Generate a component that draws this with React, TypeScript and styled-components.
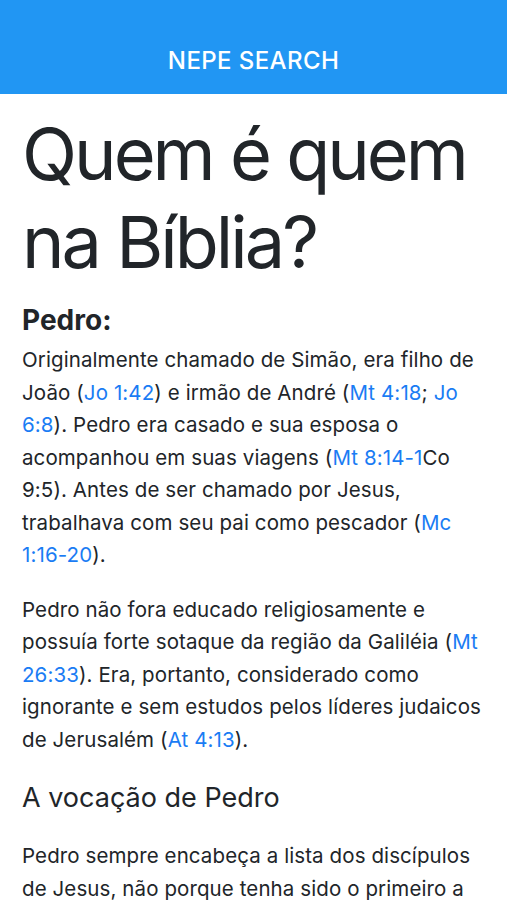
import styled, { createGlobalStyle } from "styled-components";

const GlobalStyle = createGlobalStyle`
  html, body {
    margin: 0;
    padding: 0;
    background: #ffffff;
  }
  body {
    font-family: Inter, "Noto Sans", "Liberation Sans", sans-serif;
    color: #212529;
    -webkit-font-smoothing: antialiased;
  }
`;

export default function App() {
  return (
    <>
      <GlobalStyle />
      <TopBar>
        <BarTitle>{"NEPE SEARCH"}</BarTitle>
      </TopBar>
      <Content>
        <PageTitle>{"Quem é quem na Bíblia?"}</PageTitle>
        <EntryName>{"Pedro:"}</EntryName>
        <Paragraph>
          {"Originalmente chamado de Simão, era filho de João ("}
          <Ref href="#">{"Jo 1:42"}</Ref>
          {") e irmão de André ("}
          <Ref href="#">{"Mt 4:18"}</Ref>
          {"; "}
          <Ref href="#">{"Jo 6:8"}</Ref>
          {"). Pedro era casado e sua esposa o acompanhou em suas viagens ("}
          <Ref href="#">{"Mt 8:14-1"}</Ref>
          {"Co 9:5). Antes de ser chamado por Jesus, trabalhava com seu pai como pescador ("}
          <Ref href="#">{"Mc 1:16-20"}</Ref>
          {")."}
        </Paragraph>
        <Paragraph>
          {"Pedro não fora educado religiosamente e possuía forte sotaque da região da Galiléia ("}
          <Ref href="#">{"Mt 26:33"}</Ref>
          {"). Era, portanto, considerado como ignorante e sem estudos pelos líderes judaicos de Jerusalém ("}
          <Ref href="#">{"At 4:13"}</Ref>
          {")."}
        </Paragraph>
        <SectionTitle>{"A vocação de Pedro"}</SectionTitle>
        <Paragraph>
          {"Pedro sempre encabeça a lista dos discípulos de Jesus, não porque tenha sido o primeiro a ser chamado, mas porque se destacou entre os doze."}
        </Paragraph>
      </Content>
    </>
  );
}

const TopBar = styled.header`
  background-color: #2196f3;
  height: 94px;
  display: flex;
  align-items: flex-end;
  justify-content: center;
  padding-bottom: 19px;
  box-sizing: border-box;
`;

const BarTitle = styled.h1`
  margin: 0;
  color: #ffffff;
  font-size: 24px;
  font-weight: 500;
  line-height: 28px;
  letter-spacing: 0.4px;
`;

const Content = styled.main`
  padding: 16px 22px 40px;
`;

const PageTitle = styled.h2`
  margin: 0 0 17px;
  font-size: 72px;
  font-weight: 400;
  line-height: 88px;
  letter-spacing: -3px;
  color: #212529;
`;

const EntryName = styled.h3`
  margin: 0 0 7px;
  font-size: 28px;
  font-weight: 700;
  line-height: 34px;
`;

const Paragraph = styled.p`
  margin: 0 0 22px;
  font-size: 20.5px;
  line-height: 32.5px;
  font-weight: 400;
  letter-spacing: 0.1px;
`;

const SectionTitle = styled.h4`
  margin: 24px 0 24px;
  font-size: 27px;
  font-weight: 400;
  line-height: 36px;
`;

const Ref = styled.a`
  color: #1a7cf4;
  text-decoration: none;
`;
